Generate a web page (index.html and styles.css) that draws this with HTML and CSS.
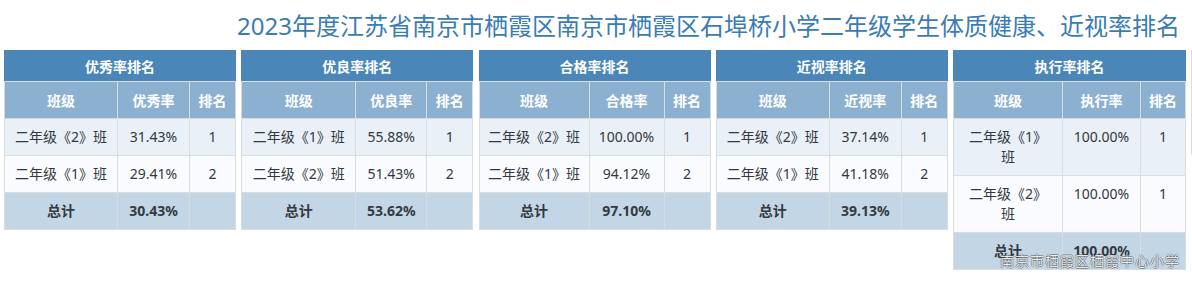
FILE: index.html
```html
<!DOCTYPE html>
<html lang="zh-CN">
<head>
<meta charset="utf-8">
<title>体质健康、近视率排名</title>
<link rel="stylesheet" href="styles.css">
</head>
<body>
<div class="page">
  <h1 class="title">2023年度江苏省南京市栖霞区南京市栖霞区石埠桥小学二年级学生体质健康、近视率排名</h1>
  <div class="tables">
    <table class="rank">
      <colgroup><col class="c1"><col class="c2"><col class="c3"></colgroup>
      <thead>
        <tr class="h1"><th colspan="3">优秀率排名</th></tr>
        <tr class="h2"><th>班级</th><th>优秀率</th><th>排名</th></tr>
      </thead>
      <tbody>
        <tr class="odd"><td>二年级《2》班</td><td>31.43%</td><td>1</td></tr>
        <tr class="even"><td>二年级《1》班</td><td>29.41%</td><td>2</td></tr>
        <tr class="total"><td>总计</td><td>30.43%</td><td></td></tr>
      </tbody>
    </table>
    <table class="rank">
      <colgroup><col class="c1 w114"><col class="c2 w71"><col class="c3"></colgroup>
      <thead>
        <tr class="h1"><th colspan="3">优良率排名</th></tr>
        <tr class="h2"><th>班级</th><th>优良率</th><th>排名</th></tr>
      </thead>
      <tbody>
        <tr class="odd"><td>二年级《1》班</td><td>55.88%</td><td>1</td></tr>
        <tr class="even"><td>二年级《2》班</td><td>51.43%</td><td>2</td></tr>
        <tr class="total"><td>总计</td><td>53.62%</td><td></td></tr>
      </tbody>
    </table>
    <table class="rank">
      <colgroup><col class="c1 w110"><col class="c2 w75"><col class="c3"></colgroup>
      <thead>
        <tr class="h1"><th colspan="3">合格率排名</th></tr>
        <tr class="h2"><th>班级</th><th>合格率</th><th>排名</th></tr>
      </thead>
      <tbody>
        <tr class="odd"><td>二年级《2》班</td><td>100.00%</td><td>1</td></tr>
        <tr class="even"><td>二年级《1》班</td><td>94.12%</td><td>2</td></tr>
        <tr class="total"><td>总计</td><td>97.10%</td><td></td></tr>
      </tbody>
    </table>
    <table class="rank">
      <colgroup><col class="c1"><col class="c2"><col class="c3"></colgroup>
      <thead>
        <tr class="h1"><th colspan="3">近视率排名</th></tr>
        <tr class="h2"><th>班级</th><th>近视率</th><th>排名</th></tr>
      </thead>
      <tbody>
        <tr class="odd"><td>二年级《2》班</td><td>37.14%</td><td>1</td></tr>
        <tr class="even"><td>二年级《1》班</td><td>41.18%</td><td>2</td></tr>
        <tr class="total"><td>总计</td><td>39.13%</td><td></td></tr>
      </tbody>
    </table>
    <table class="rank narrow">
      <colgroup><col class="c1 w109"><col class="c2 w78"><col class="c3"></colgroup>
      <thead>
        <tr class="h1"><th colspan="3">执行率排名</th></tr>
        <tr class="h2"><th>班级</th><th>执行率</th><th>排名</th></tr>
      </thead>
      <tbody>
        <tr class="odd"><td class="wrap">二年级《1》班</td><td>100.00%</td><td>1</td></tr>
        <tr class="even"><td class="wrap">二年级《2》班</td><td>100.00%</td><td>1</td></tr>
        <tr class="total"><td>总计</td><td>100.00%</td><td></td></tr>
      </tbody>
    </table>
    <div class="edge"></div>
  </div>
  <div class="watermark">南京市栖霞区栖霞中心小学</div>
</div>
</body>
</html>
```

FILE: styles.css
```css
html, body {
  margin: 0;
  padding: 0;
  background: #ffffff;
}

.page {
  position: relative;
  width: 1192px;
  height: 281px;
  overflow: hidden;
  font-family: "Noto Sans", "Noto Sans CJK SC", sans-serif;
  color: #333840;
}

.title {
  margin: 10px 12px 8px 0;
  font-size: 24px;
  line-height: 32px;
  font-weight: 400;
  color: #3a7cb3;
  text-align: right;
  font-family: "Noto Sans", "Noto Sans CJK SC", sans-serif;
}

.tables {
  display: flex;
  align-items: flex-start;
  gap: 5.25px;
  padding-left: 4px;
}

.rank {
  width: 232px;
  table-layout: fixed;
  border-collapse: collapse;
  border: 1px solid #dadde0;
  font-size: 14px;
  line-height: 20px;
  text-align: center;
}

.rank col.c1 { width: 113px; }
.rank col.c2 { width: 72px; }
.rank col.c3 { width: 46px; }
.rank col.w114 { width: 114px; }
.rank col.w71 { width: 71px; }
.rank col.w110 { width: 110px; }
.rank col.w75 { width: 75px; }
.rank col.w109 { width: 109px; }
.rank col.w78 { width: 78px; }
.rank.narrow col.c3 { width: 45px; }

.rank th,
.rank td {
  border: 1px solid #dadde0;
  padding: 8px 2px;
  vertical-align: top;
  white-space: nowrap;
}

.rank th {
  color: #ffffff;
  font-weight: 700;
  font-family: "Noto Sans CJK SC", sans-serif;
}

.rank .h1 th {
  background: #4a86b8;
  padding: 5px 2px;
  border-color: #4a86b8 #4a86b8 #dadde0 #4a86b8;
}

.rank .h2 th {
  background: #8cb0cf;
  padding: 8px 2px;
}

.rank .odd td { background: #e9f0f8; }
.rank .even td { background: #f9fbfe; }

.rank .total td {
  background: #c3d6e5;
  font-weight: 700;
  color: #333a42;
  vertical-align: middle;
}

.rank td.wrap {
  white-space: normal;
  padding-left: 14px;
  padding-right: 14px;
}

.edge {
  width: 2px;
  height: 105px;
  flex: none;
  background: #dcdcdc;
}

.watermark {
  position: absolute;
  right: 12px;
  top: 250px;
  font-family: "Noto Sans CJK SC", sans-serif;
  font-weight: 300;
  font-size: 14px;
  line-height: 20px;
  letter-spacing: 1px;
  color: #ffffff;
  text-shadow: 1px 0 0 rgba(60, 60, 60, 0.55), -1px 0 0 rgba(60, 60, 60, 0.55), 0 1px 0 rgba(60, 60, 60, 0.55), 0 -1px 0 rgba(60, 60, 60, 0.55);
}
```
